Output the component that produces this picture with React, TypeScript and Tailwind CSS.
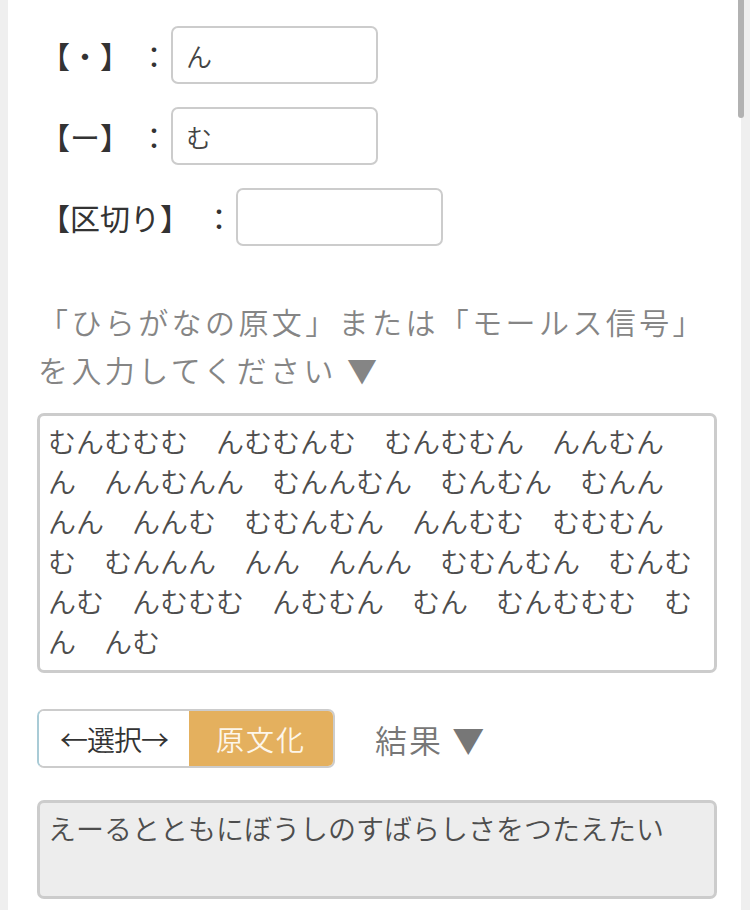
import { useState } from "react";

const JP = "font-['Noto_Sans_CJK_JP','Noto_Sans',sans-serif]";

const MORSE_LINES = [
  "むんむむむ　んむむんむ　むんむむん　んんむん",
  "ん　んんむんん　むんんむん　むんむん　むんん",
  "んん　んんむ　むむんむん　んんむむ　むむむん",
  "む　むんんん　んん　んんん　むむんむん　むんむ",
  "んむ　んむむむ　んむむん　むん　むんむむむ　む",
  "ん　んむ",
];

function SymbolRow({ label, value, gap }: { label: string; value: string; gap: string }) {
  return (
    <div className="flex items-center h-[58px]">
      <span className="text-[30px] text-[#333] leading-none">{label}</span>
      {/* colon spacing differs a little per row in the original */}
      <span className={`text-[30px] text-[#333] leading-none ${gap}`}>：</span>
      <input
        defaultValue={value}
        className="ml-[2px] w-[207px] h-[58px] border-2 border-[#ccc] rounded-[7px] px-[13px] text-[26px] font-[350] text-[#444] bg-white outline-none"
      />
    </div>
  );
}

export default function App() {
  const [morse, setMorse] = useState(MORSE_LINES.join("\n"));

  return (
    <div className={`relative min-h-screen bg-[#efefef] ${JP}`}>
      <div className="ml-[8px] w-[733px] bg-white pl-[29px] pr-[24px] pt-[26px] pb-[12px]">
        <div className="flex flex-col gap-[23px] pl-[3px]">
          <SymbolRow label="【・】" value="ん" gap="ml-[9px]" />
          <SymbolRow label="【ー】" value="む" gap="ml-[9px]" />
          <SymbolRow label="【区切り】" value="" gap="ml-[14px]" />
        </div>

        <p className="mt-[51px] pl-[1px] text-[30px] font-[350] leading-[48px] tracking-[3.4px] text-[#858585]">
          「ひらがなの原文」または「モールス信号」を入力してください ▼
        </p>

        <textarea
          value={morse}
          onChange={(e) => setMorse(e.target.value)}
          className="mt-[20px] block w-[680px] h-[260px] border-[3px] border-[#ccc] rounded-[7px] pl-[8px] pr-[9px] py-[5px] text-[28px] font-[350] leading-[40px] text-[#4d4d4d] resize-none overflow-hidden outline-none whitespace-pre"
        />

        <div className="mt-[36px] flex items-center">
          <div className="flex w-[298px] h-[59px] border-2 border-[#ccc] border-l-[#a9cbd6] rounded-[7px] overflow-hidden">
            <button className="w-[150px] bg-white text-[28px] font-[350] text-[#333] tracking-[-1px]">←選択→</button>
            <button className="flex-1 bg-[#e4b05e] text-[28px] font-[350] text-[#fdf6ea] tracking-[2px]">原文化</button>
          </div>
          <span className="ml-[40px] text-[32px] font-[350] text-[#777] tracking-[2px]">結果 ▼</span>
        </div>

        <textarea
          readOnly
          value="えーるとともにぼうしのすばらしさをつたえたい"
          className="mt-[32px] block w-[680px] h-[99px] border-[3px] border-[#ccc] rounded-[7px] bg-[#ededed] pl-[8px] pr-[9px] py-[5px] text-[28px] font-[350] leading-[40px] text-[#4d4d4d] resize-none overflow-hidden outline-none"
        />
      </div>

      {/* scroll thumb */}
      <div className="absolute left-[738px] top-0 w-[6px] h-[118px] bg-[#b2b2b2] rounded-b-full" />
    </div>
  );
}
